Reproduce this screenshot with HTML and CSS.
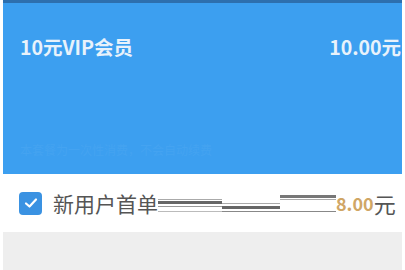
FILE: index.html
```html
<!DOCTYPE html>
<html>
  <head>
    <title>订单</title>
    <meta name="viewport" content="width=device-width, initial-scale=1.0" />
    <link rel="stylesheet" href="styles.css">
  </head>
  <body>
    <div class="page">
      <div class="card">
        <div class="card-row">
          <span>10元VIP会员</span>
          <span>10.00元</span>
        </div>
        <div class="card-note">本套餐为一次性消费，不会自动续费</div>
      </div>
      <div class="discount">
        <span class="check">
          <svg width="14" height="12" viewBox="0 0 14 12"><path d="M2 6.5 L5.5 9.5 L12 2.5" fill="none" stroke="#fff" stroke-width="2.2" stroke-linecap="round" stroke-linejoin="round"/></svg>
        </span>
        <span class="discount-label">新用户首单</span>
        <svg class="strike" width="178" height="22" viewBox="0 0 178 22">
          <rect x="0" y="6" width="64" height="1" fill="#aaa"/>
          <rect x="0" y="8" width="64" height="3" fill="#666"/>
          <rect x="0" y="13" width="64" height="1" fill="#999"/>
          <rect x="64" y="10" width="58" height="1" fill="#aaa"/>
          <rect x="64" y="13" width="58" height="3" fill="#666"/>
          <rect x="64" y="18" width="114" height="1" fill="#888"/>
          <rect x="122" y="2" width="56" height="3" fill="#777"/>
          <rect x="122" y="6" width="56" height="1" fill="#aaa"/>
          <rect x="0" y="18" width="64" height="1" fill="#bbb"/>
        </svg>
        <span class="discount-price">8.00</span><span class="discount-unit">元</span>
      </div>
      <div class="footer"></div>
    </div>
  </body>
</html>
```

FILE: styles.css
```css
body {
  margin: 0;
  background: #fff;
  font-family: "Noto Sans CJK SC", "Noto Sans", sans-serif;
}
.page {
  padding: 0 3px 0 3px;
  height: 270px;
  display: flex;
  flex-direction: column;
}
.card {
  background: #3c9ff0;
  border-top: 3px solid #2d6fae;
  height: 171px;
  color: #e8f2fb;
  padding: 0 1px 0 17px;
}
.card-row {
  display: flex;
  justify-content: space-between;
  font-size: 19.5px;
  font-weight: bold;
  margin-top: 32px;
  line-height: 24px;
}
.card-note {
  margin-top: 82px;
  font-size: 12px;
  color: #44a3f1;
}
.discount {
  height: 58px;
  display: flex;
  align-items: center;
  padding-left: 16px;
  color: #555;
}
.check {
  width: 23px;
  height: 23px;
  border-radius: 4px;
  background: #3a92e2;
  display: flex;
  align-items: center;
  justify-content: center;
}
.discount-label {
  margin-left: 11px;
  font-size: 21px;
}
.strike {
  margin-top: 2px;
}
.discount-price {
  font-size: 18px;
  font-weight: bold;
  color: #d0a665;
}
.discount-unit {
  font-size: 22px;
  color: #555;
}
.footer {
  flex: 1;
  background: #eeeeee;
}
```
